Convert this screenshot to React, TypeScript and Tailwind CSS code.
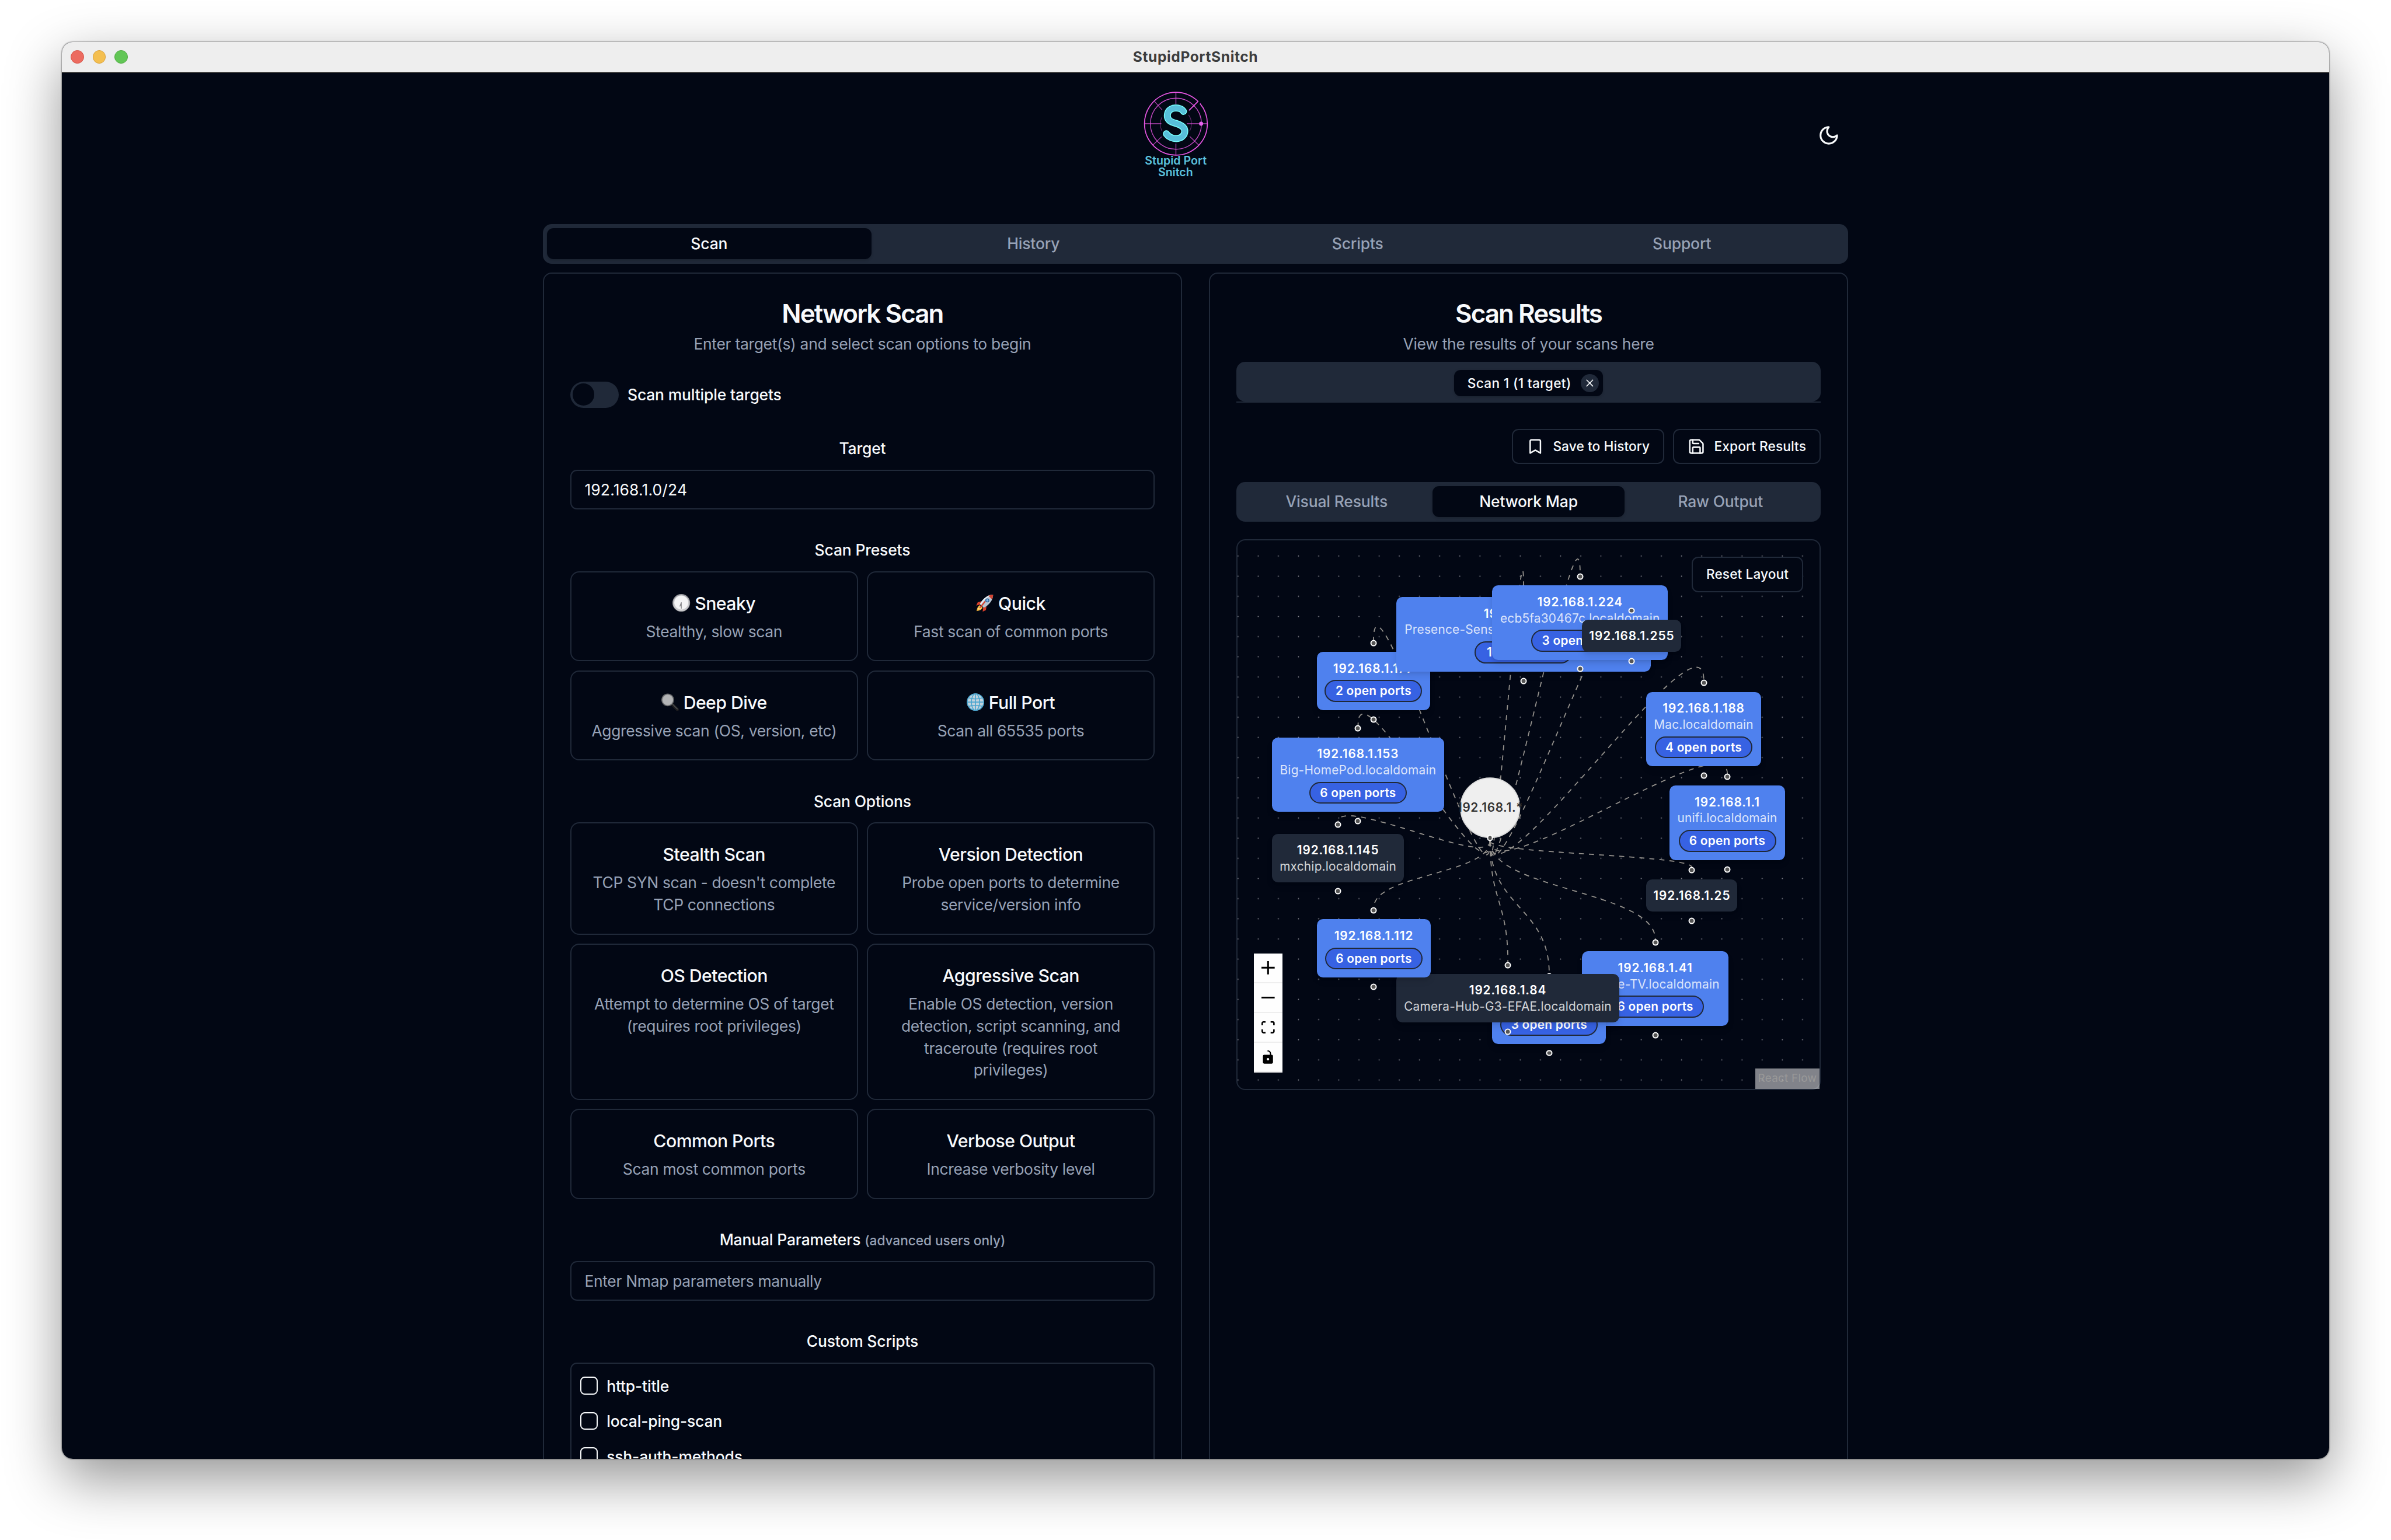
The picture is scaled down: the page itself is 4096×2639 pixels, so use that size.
import type { ReactNode } from "react";
import { Bookmark, Save, X } from "lucide-react";

/* ---------- brand + emoji artwork ---------- */

function Logo() {
  const s = "M318 187 C304 162 246 160 233 194 C221 236 252 245 280 253 C309 262 330 276 324 304 C314 344 252 345 225 309";
  return (
    <svg viewBox="-23 0 600 600" className="size-[100px]" fill="none">
      <g stroke="#e455e0" strokeWidth="4.5">
        <path d="M397.9 133.1A171 171 0 0 0 106 254A171 171 0 0 0 448 254A171 171 0 0 0 408 144.1" strokeWidth="5.5" />
        <path d="M397 133 L350 180" strokeWidth="6" strokeLinecap="round" />
        <circle cx="277" cy="254" r="139" strokeWidth="4.5" opacity="0.85" />
        <path d="M277 86V146M277 362V422M106 254H198M336 254H447" strokeWidth="4.5" opacity="0.8" />
        <path d="M160 132L202 179M152 370L199 325M401 370L352 323" strokeWidth="4" opacity="0.75" />
        <path d="M200 220A86 86 0 0 0 200 292M346 206A86 86 0 0 1 352 294" strokeWidth="4" opacity="0.4" />
      </g>
      <circle cx="414" cy="254" r="11" fill="#e863ee" />
      <path d={s} stroke="#76fbfb" strokeWidth="38" strokeLinecap="round" />
      <path d={s} stroke="#58bfda" strokeWidth="28" strokeLinecap="round" />
      <g fill="#5cc3de" fontFamily="Inter, sans-serif" fontWeight="600" fontSize="62" textAnchor="middle">
        <text x="276" y="475" textLength="336">Stupid Port</text>
        <text x="275" y="540" textLength="189">Snitch</text>
      </g>
    </svg>
  );
}

function ClockEmoji() {
  return (
    <svg viewBox="0 0 32 32" className="size-4">
      <circle cx="16" cy="16" r="16" fill="#9b9ca1" />
      <circle cx="16" cy="16.6" r="14.6" fill="#c9c9cc" />
      <circle cx="16" cy="15.4" r="12.6" fill="#f4f4f5" />
      <path d="M16 15.5V26M16 15.5L13.6 22" stroke="#86868a" strokeWidth="1.5" strokeLinecap="round" />
    </svg>
  );
}

function RocketEmoji() {
  return (
    <svg viewBox="0 0 32 32" className="size-4">
      <path d="M10 13L3 15L0.500 21L7 19Z" fill="#d8402b" />
      <path d="M19 22L18 29L12 32L13 25Z" fill="#d8402b" />
      <path d="M7 20C2 23 2 27 1 31C6 30 10 29 12 25Z" fill="#f6b73c" />
      <path d="M8 22C5 24 4 26 4 28C7 28 9 27 10 25Z" fill="#fdf0a0" />
      <path d="M31 1C22 1 13 7 7 18L14 25C25 19 31 10 31 1Z" fill="#b9c6d3" />
      <path d="M31 1C23 1 13 7 7 18L9 20C14 11 22 4 31 1Z" fill="#e8eef3" />
      <path d="M31 1C28 1 25 1.800 22.500 3.200L28.800 9.500C30.300 7 31 4 31 1Z" fill="#d24533" />
      <circle cx="20.500" cy="11.500" r="3.600" fill="#2f5f96" />
      <circle cx="20.500" cy="11.500" r="2.200" fill="#7db7e6" />
      <path d="M16 14L7 25" stroke="#d8402b" strokeWidth="2.400" strokeLinecap="round" />
    </svg>
  );
}

function MagnifierEmoji() {
  return (
    <svg viewBox="0 0 32 32" className="size-4">
      <path d="M19.500 20L29 29.500" stroke="#1c1c1e" strokeWidth="5.400" strokeLinecap="round" />
      <path d="M20.500 20L29 28.500" stroke="#55565a" strokeWidth="1.400" strokeLinecap="round" />
      <circle cx="11.500" cy="12" r="10.800" fill="#a6a7a9" stroke="#5e6063" strokeWidth="1.600" />
      <circle cx="11.500" cy="12" r="8.800" fill="#b3b4b6" />
    </svg>
  );
}

function GlobeEmoji() {
  return (
    <svg viewBox="0 0 32 32" className="size-4" fill="none">
      <circle cx="16" cy="16" r="15.500" fill="#c2d3de" />
      <g stroke="#4aa5cf" strokeWidth="1.700">
        <circle cx="16" cy="16" r="15" />
        <ellipse cx="16" cy="16" rx="7.500" ry="15" />
        <path d="M16 1V31M1 16H31M4 8.500Q16 12 28 8.500M4 23.500Q16 20 28 23.500" />
      </g>
    </svg>
  );
}

/* ---------- small building blocks ---------- */

function Tab({ active, children }: { active?: boolean; children: ReactNode }) {
  return (
    <div
      className={
        active
          ? "flex flex-1 items-center justify-center rounded-md bg-[#020714] text-sm font-[550] tracking-[-0.006em] text-[#f8fafc] shadow-sm"
          : "flex flex-1 items-center justify-center text-sm font-[550] tracking-[-0.006em] text-[#97a2b6]"
      }
    >
      {children}
    </div>
  );
}

function SectionLabel({ children }: { children: ReactNode }) {
  return <div className="mt-6 h-6 text-center text-sm leading-[26.2px] font-[550] tracking-[-0.006em]">{children}</div>;
}

function OptionCard({ icon, title, text }: { icon?: ReactNode; title: string; text: string }) {
  return (
    <div className="rounded-lg border-[1.06px] border-[#202939] p-[15.94px] text-center">
      <div className="flex h-6 items-center justify-center gap-1 text-base font-[550] tracking-[-0.018em]">
        {icon}
        <span className="pt-px">{title}</span>
      </div>
      <p className="mt-1 text-sm leading-5 tracking-[-0.0125em] text-[#97a2b6]">{text}</p>
    </div>
  );
}

function CardHeader({ title, text }: { title: string; text: string }) {
  return (
    <div className="px-6 pt-6 text-center">
      <h2 className="h-6 text-[23.2px] leading-[25px] font-semibold tracking-[-0.043em]">{title}</h2>
      <p className="mt-1.5 text-sm leading-5 tracking-[-0.011em] text-[#97a2b6]">{text}</p>
    </div>
  );
}

function OutlineButton({ icon, width, children }: { icon?: ReactNode; width: string; children: ReactNode }) {
  return (
    <div
      className={`${width} flex h-8 items-center justify-center gap-2 rounded-md border-[1.06px] border-[#202939] bg-[#020714] text-xs font-[550] tracking-[0.004em] whitespace-nowrap`}
    >
      {icon}
      {children}
    </div>
  );
}

/* ---------- network map ---------- */

type MapNode = {
  ip: string;
  host?: string;
  ports?: string;
  x: number;
  y: number;
  w: number;
  h: number;
};

const SCALE = 0.914;
const HUB = { x: 229, y: 242.6 };

const nodes: MapNode[] = [
  { ip: "192.168.1.1", host: "unifi.localdomain", ports: "6 open ports", x: 391.6, y: 222.5, w: 105.1, h: 67.6 },
  { ip: "192.168.1.25", x: 370.7, y: 307.5, w: 82.7, h: 29.3 },
  { ip: "192.168.1.41", host: "Apple-TV.localdomain", ports: "6 open ports", x: 312.6, y: 372.9, w: 132.5, h: 67.6 },
  { ip: "192.168.1.77", ports: "3 open ports", x: 231, y: 403.7, w: 103.2, h: 53.1 },
  { ip: "192.168.1.84", host: "Camera-Hub-G3-EFAE.localdomain", x: 143.9, y: 393.4, w: 202.5, h: 43.9 },
  { ip: "192.168.1.112", ports: "6 open ports", x: 72, y: 343.7, w: 103.3, h: 53.1 },
  { ip: "192.168.1.145", host: "mxchip.localdomain", x: 31.4, y: 266.2, w: 119.6, h: 43.9 },
  { ip: "192.168.1.153", host: "Big-HomePod.localdomain", ports: "6 open ports", x: 31.4, y: 178.8, w: 155.8, h: 67.6 },
  { ip: "192.168.1.177", ports: "2 open ports", x: 72, y: 101.2, w: 102.7, h: 53.1 },
  { ip: "192.168.1.181", host: "Presence-Sensor-FP2-2A71.localdomain", ports: "1 open ports", x: 143.9, y: 51.5, w: 230.9, h: 67.7 },
  { ip: "192.168.1.224", host: "ecb5fa30467c.localdomain", ports: "3 open ports", x: 231, y: 41, w: 159.3, h: 67.5 },
  { ip: "192.168.1.255", x: 312.6, y: 72, w: 89.9, h: 29.2 },
  { ip: "192.168.1.188", host: "Mac.localdomain", ports: "4 open ports", x: 370.7, y: 137.5, w: 104.1, h: 67.6 },
];

function edgePath(n: MapNode) {
  const sy = HUB.y + 30.2;
  const tx = n.x + n.w / 2;
  const ty = n.y - 10.8;
  const d = ty - sy;
  const bend = d >= 0 ? d / 2 : 6.25 * Math.sqrt(-d / SCALE) * SCALE;
  return `M${HUB.x} ${sy}C${HUB.x} ${sy + bend} ${tx} ${ty - bend} ${tx} ${ty}`;
}

function Handle({ x, y }: { x: number; y: number }) {
  return (
    <div
      className="absolute size-[5.8px] -translate-1/2 rounded-full border-[1.06px] border-white bg-[#555]"
      style={{ left: x, top: y }}
    />
  );
}

function HostNode({ n }: { n: MapNode }) {
  return (
    <>
      <div
        className={
          n.ports
            ? "absolute flex flex-col items-center overflow-hidden rounded-[5.5px] bg-[#4f81ee] pt-[7.8px] text-[11px] leading-[14.6px] whitespace-nowrap text-white shadow-md"
            : "absolute flex flex-col items-center overflow-hidden rounded-[5.5px] bg-[#202939] pt-[7.6px] text-[11px] leading-[14.6px] whitespace-nowrap text-white shadow-md"
        }
        style={{ left: n.x, top: n.y, width: n.w, height: n.h }}
      >
        <div className="font-semibold tracking-[0.045em]">{n.ip}</div>
        {n.host && <div className="font-[430] tracking-[0.012em] opacity-80">{n.host}</div>}
        {n.ports && (
          <div className="mt-[3.2px] flex h-[20px] w-[88.4px] items-center justify-center rounded-full border-[1.06px] border-[#202939] bg-[#3762e3] font-semibold tracking-[0.013em]">
            {n.ports}
          </div>
        )}
      </div>
      <Handle x={n.x + n.w / 2} y={n.y - 8.1} />
      <Handle x={n.x + n.w / 2} y={n.y + n.h + 8.3} />
    </>
  );
}

const controls = [
  { box: "0 0 32 32", d: "M32 18.133H18.133V32h-4.266V18.133H0v-4.266h13.867V0h4.266v13.867H32z" },
  { box: "0 0 32 5", d: "M0 0h32v4.2H0z" },
  {
    box: "0 0 32 30",
    d: "M3.692 4.63c0-.53.4-.938.939-.938h5.215V0H4.708C2.13 0 0 2.054 0 4.63v5.216h3.692V4.631zM27.354 0h-5.2v3.692h5.17c.53 0 .984.4.984.939v5.215H32V4.631A4.624 4.624 0 0027.354 0zm.954 24.83c0 .532-.4.94-.939.94h-5.215v3.768h5.215c2.577 0 4.631-2.13 4.631-4.707v-5.139h-3.692v5.139zm-23.677.94c-.531 0-.939-.4-.939-.94v-5.138H0v5.139c0 2.577 2.13 4.707 4.708 4.707h5.138V25.77H4.631z",
  },
  {
    box: "0 0 25 32",
    d: "M21.333 10.667H19.81V7.619C19.81 3.429 16.38 0 12.19 0c-4.114 1.828-1.37 2.133.305 2.438 1.676.305 4.42 2.59 4.42 5.181v3.048H3.047A3.056 3.056 0 000 13.714v15.238A3.056 3.056 0 003.048 32h18.285a3.056 3.056 0 003.048-3.048V13.714a3.056 3.056 0 00-3.048-3.047zM12.19 24.533a3.056 3.056 0 01-3.047-3.047 3.056 3.056 0 013.047-3.048 3.056 3.056 0 013.048 3.048 3.056 3.056 0 01-3.048 3.047z",
  },
];

function NetworkMap() {
  return (
    <div className="relative mt-4 h-[500px] rounded-lg border-[1.06px] border-[#202939]">
      <svg className="absolute inset-0 size-full" fill="none">
        <defs>
          <pattern id="dots" x="-8.700" y="5.060" width="18.280" height="18.280" patternUnits="userSpaceOnUse">
            <circle cx="9.140" cy="9.140" r="0.480" fill="#91919a" />
          </pattern>
        </defs>
        <rect width="100%" height="100%" fill="url(#dots)" />
        {nodes.map((n) => (
          <path key={n.ip} d={edgePath(n)} stroke="#94918c" strokeWidth="0.950" strokeDasharray="4.570 4.570" />
        ))}
      </svg>
      <div
        className="absolute flex size-[54.8px] -translate-1/2 items-center justify-center rounded-full border-[1.06px] border-[#dddddd] bg-[#efefef] text-[11px] font-semibold tracking-[0.03em] whitespace-nowrap text-[#333]"
        style={{ left: HUB.x, top: HUB.y }}
      >
        192.168.1.*
      </div>
      <Handle x={HUB.x} y={HUB.y + 27.5} />
      {nodes.map((n) => (
        <HostNode key={n.ip} n={n} />
      ))}
      <div className="absolute top-[15px] right-[15px]">
        <OutlineButton width="w-[101px]">Reset Layout</OutlineButton>
      </div>
      <div className="absolute bottom-[15px] left-[15px] w-[26px] bg-[#fefefe]">
        {controls.map((c) => (
          <div key={c.box} className="flex h-[27px] items-center justify-center border-b-[1.06px] border-[#eee]">
            <svg viewBox={c.box} className="max-h-3 w-3" fill="#000">
              <path d={c.d} />
            </svg>
          </div>
        ))}
      </div>
      <div className="absolute right-0 bottom-0 flex h-[19px] w-[58.6px] items-center justify-center bg-white/50 text-[10px] tracking-[0.013em] text-[#999]">
        React Flow
      </div>
    </div>
  );
}

/* ---------- panels ---------- */

function ScanPanel() {
  return (
    <section className="h-[1200px] rounded-lg border-[1.06px] border-[#202939]">
      <CardHeader title="Network Scan" text="Enter target(s) and select scan options to begin" />
      <div className="px-[23.94px] pt-6">
        <div className="flex items-center gap-2 text-sm font-[550] tracking-[-0.006em]">
          <div className="h-6 w-11 rounded-full bg-[#202939] p-0.5">
            <div className="size-5 rounded-full bg-[#020714]" />
          </div>
          <span className="pt-px">Scan multiple targets</span>
        </div>

        <SectionLabel>Target</SectionLabel>
        <div className="mt-2 flex h-9 items-center rounded-md border-[1.06px] border-[#202939] px-3 pt-px text-sm tracking-[0.006em]">
          192.168.1.0/24
        </div>

        <SectionLabel>Scan Presets</SectionLabel>
        <div className="mt-2 grid grid-cols-2 gap-2">
          <OptionCard icon={<ClockEmoji />} title="Sneaky" text="Stealthy, slow scan" />
          <OptionCard icon={<RocketEmoji />} title="Quick" text="Fast scan of common ports" />
          <OptionCard icon={<MagnifierEmoji />} title="Deep Dive" text="Aggressive scan (OS, version, etc)" />
          <OptionCard icon={<GlobeEmoji />} title="Full Port" text="Scan all 65535 ports" />
        </div>

        <SectionLabel>Scan Options</SectionLabel>
        <div className="mt-2 grid grid-cols-2 gap-2">
          <OptionCard title="Stealth Scan" text="TCP SYN scan - doesn't complete TCP connections" />
          <OptionCard title="Version Detection" text="Probe open ports to determine service/version info" />
          <OptionCard title="OS Detection" text="Attempt to determine OS of target (requires root privileges)" />
          <OptionCard
            title="Aggressive Scan"
            text="Enable OS detection, version detection, script scanning, and traceroute (requires root privileges)"
          />
          <OptionCard title="Common Ports" text="Scan most common ports" />
          <OptionCard title="Verbose Output" text="Increase verbosity level" />
        </div>

        <SectionLabel>
          Manual Parameters <span className="text-xs tracking-[-0.002em] text-[#97a2b6]">(advanced users only)</span>
        </SectionLabel>
        <div className="mt-2 flex h-9 items-center rounded-md border-[1.06px] border-[#202939] px-3 pt-px text-sm tracking-[-0.012em] text-[#97a2b6]">
          Enter Nmap parameters manually
        </div>

        <SectionLabel>Custom Scripts</SectionLabel>
        <div className="mt-2 flex h-48 flex-col gap-2 rounded-md border-[1.06px] border-[#202939] p-2">
          {["http-title", "local-ping-scan", "ssh-auth-methods"].map((name) => (
            <div key={name} className="flex h-6 items-center gap-2 text-sm font-[550] tracking-[-0.006em]">
              <div className="size-4 rounded-sm border-[1.06px] border-[#f8fafc]" />
              <span className="pt-[1.5px]">{name}</span>
            </div>
          ))}
        </div>
      </div>
    </section>
  );
}

function ResultsPanel() {
  return (
    <section className="h-[1200px] rounded-lg border-[1.06px] border-[#202939]">
      <CardHeader title="Scan Results" text="View the results of your scans here" />
      <div className="px-[23.94px] pt-1.5">
        <div className="h-[37px] border-b-[1.06px] border-[#202939]">
          <div className="flex h-9 items-start justify-center rounded-lg bg-[#202939] pt-[7.5px]">
            <div className="flex h-6 w-[135px] items-center justify-between rounded-md bg-[#020714] pr-1 pl-3 text-xs font-[550] tracking-[0.015em] shadow-sm">
              <span className="pt-[0.5px]">Scan 1 (1 target)</span>
              <span className="flex size-4 items-center justify-center rounded-full bg-[#202939]">
                <X className="size-[11px]" strokeWidth={1.8} />
              </span>
            </div>
          </div>
        </div>
        <div className="mt-6 flex justify-end gap-2">
          <OutlineButton width="w-[138px]" icon={<Bookmark className="size-4" />}>
            Save to History
          </OutlineButton>
          <OutlineButton width="w-[134px]" icon={<Save className="size-4" />}>
            Export Results
          </OutlineButton>
        </div>
        <div className="mt-4 flex h-9 rounded-lg bg-[#202939] p-1">
          <Tab>Visual Results</Tab>
          <Tab active>Network Map</Tab>
          <Tab>Raw Output</Tab>
        </div>
        <NetworkMap />
      </div>
    </section>
  );
}

export default function App() {
  return (
    <div className="h-[1396.8px] w-[2168px] overflow-hidden bg-white px-14 pt-[38px] font-[Inter,sans-serif] text-[#f8fafc] [zoom:1.889299]">
      <div className="h-[1285px] rounded-[10px] shadow-[0_18px_50px_rgba(0,0,0,0.42),0_0_1px_0.500px_rgba(0,0,0,0.35)]">
        <div className="h-full overflow-hidden rounded-[10px] bg-[#020714]">
          <div className="relative flex h-7 items-center justify-center border-b-[0.53px] border-black bg-[#eeeeee] text-[13px] font-bold tracking-[0.025em] text-[#3d3d3d]">
            <div className="absolute left-2 flex gap-2">
              <div className="size-3 rounded-full border-[0.53px] border-[#d55448] bg-[#ec6b60]" />
              <div className="size-3 rounded-full border-[0.53px] border-[#d9a23c] bg-[#f4bf50]" />
              <div className="size-3 rounded-full border-[0.53px] border-[#4aa73c] bg-[#62c656]" />
            </div>
            StupidPortSnitch
          </div>

          <main className="mx-auto w-[1184px]">
            <header className="flex h-[137px] items-start pt-1">
              <div className="flex flex-1 justify-center">
                <Logo />
              </div>
              <div className="mt-[34.7px] flex size-9 items-center justify-center">
                <svg
                  viewBox="0 0 24 24"
                  className="size-5"
                  fill="none"
                  stroke="currentColor"
                  strokeWidth="2"
                  strokeLinecap="round"
                  strokeLinejoin="round"
                >
                  <path d="M12 3a6 6 0 0 0 9 9 9 9 0 1 1-9-9Z" />
                </svg>
              </div>
            </header>
            <nav className="flex h-9 rounded-lg bg-[#202939] p-1">
              <Tab active>Scan</Tab>
              <Tab>History</Tab>
              <Tab>Scripts</Tab>
              <Tab>Support</Tab>
            </nav>
            <div className="mt-2 grid grid-cols-2 gap-6">
              <ScanPanel />
              <ResultsPanel />
            </div>
          </main>
        </div>
      </div>
    </div>
  );
}
